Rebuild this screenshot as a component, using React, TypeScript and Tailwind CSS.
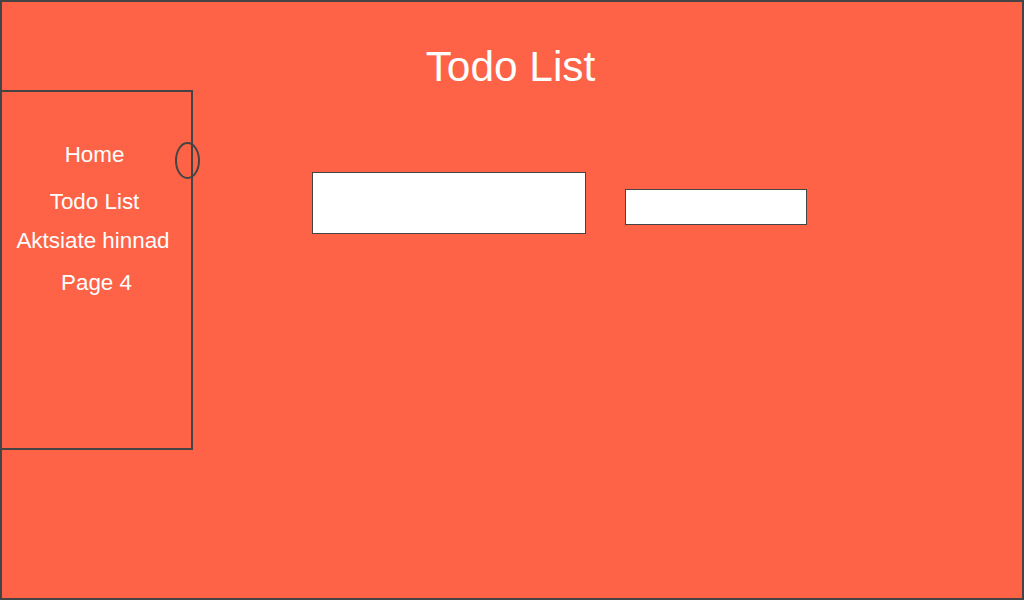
import React from "react";

export default function App() {
  return (
    <div
      className="w-[1024px] h-[600px] box-border border-2 border-[#444444] bg-[#ff6347] flex flex-col overflow-hidden text-white"
      style={{ fontFamily: '"Liberation Sans", Arial, sans-serif' }}
    >
      <div className="h-[88px] shrink-0 pt-[42px] pr-[3px] text-center">
        <h1 className="text-[42.4px] leading-[46px] font-normal">Todo List</h1>
      </div>
      <div className="flex items-start">
        <nav className="relative w-[191px] h-[360px] shrink-0 box-border border-y-2 border-r-2 border-[#444444] pt-[50px] pr-[4px] flex flex-col items-center text-[22.4px] leading-[26px]">
          <span>Home</span>
          <span className="mt-[21px]">Todo List</span>
          <span className="mt-[13px] mr-[3px]">Aktsiate hinnad</span>
          <span className="mt-[16px] ml-[4px]">Page 4</span>
          <div className="absolute left-[173px] top-[50px] w-[25px] h-[37px] box-border border-2 border-[#444444] rounded-[50%]" />
        </nav>
        <main className="flex items-start">
          <textarea className="ml-[119px] mt-[82px] w-[274px] h-[62px] box-border border border-[#444444] bg-white resize-none outline-none" />
          <input className="ml-[39px] mt-[99px] w-[182px] h-[36px] box-border border border-[#444444] bg-white outline-none" />
        </main>
      </div>
    </div>
  );
}
